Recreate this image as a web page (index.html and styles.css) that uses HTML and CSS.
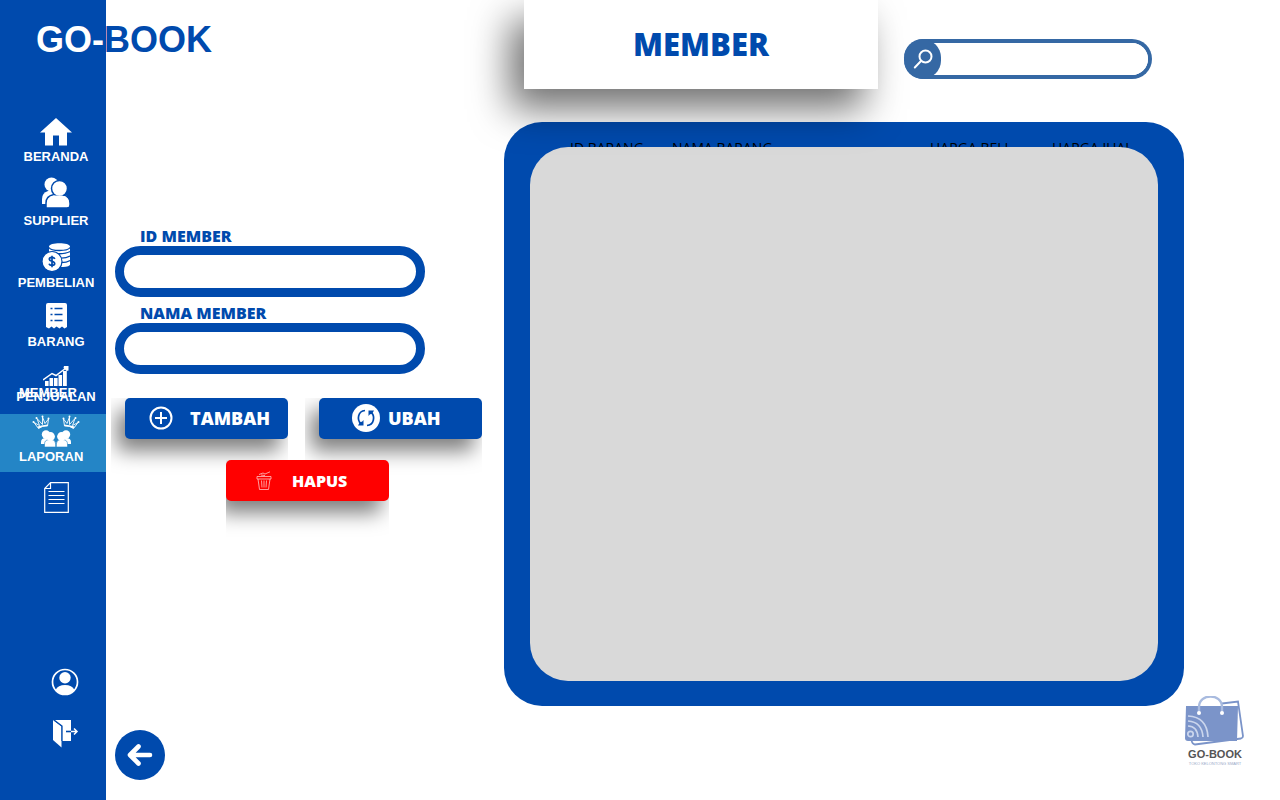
FILE: index.html
```html
<!DOCTYPE html>
<html lang="id">
<head>
<meta charset="utf-8">
<meta name="viewport" content="width=device-width, initial-scale=1">
<title>GO-BOOK | Member</title>
<link rel="stylesheet" href="styles.css">
</head>
<body>
<div class="app">
  <aside class="sidebar">
    <div class="brand"><span class="brand-light">GO-</span><span class="brand-blue">BOOK</span></div>
    <nav class="nav">
      <a class="nav-item" href="#beranda">
        <svg width="32" height="28" viewBox="0 0 32 28" fill="#fff"><path d="M16 0 32 14.500H27V27.500H19V17.500H13V27.500H5V14.500H0Z"/></svg>
        <span>BERANDA</span>
      </a>
      <a class="nav-item nav-item-tall" href="#supplier">
        <svg width="28" height="31" viewBox="0 0 28 31" fill="#fff"><circle cx="9.500" cy="7.500" r="7"/><path d="M0 27V22Q0 16 6 14H14V27Z"/><g stroke="#004aad" stroke-width="1.500"><path d="M4 31V26Q4 19 12 17.500H20Q28 19 28 26V28Q28 31 25 31Z"/><circle cx="17.500" cy="11.500" r="8"/></g><path d="M5 30V26Q5 20 12 18.500H20Q27 20 27 26V28Q27 30 25 30Z"/></svg>
        <span>SUPPLIER</span>
      </a>
      <a class="nav-item" href="#pembelian">
        <svg width="28" height="29" viewBox="0 0 28 29" fill="#fff"><path d="M7 3.500C7 -1 28 -1 28 3.500V22C26 24 22 24 18 24V10H7Z"/><path d="M7 4.500C9 8.500 26 8.500 28 4.500M13 10.500Q23 11.500 28 8.500M17 15Q24 15.500 28 13M19 19.500Q25 19.500 28 17.500" fill="none" stroke="#004aad" stroke-width="1.300"/><circle cx="10" cy="18.500" r="10" stroke="#004aad" stroke-width="1.200"/><path d="M12.800 16C12 13.800 7.300 13.900 7.300 16.200C7.300 18.700 12.700 17.800 12.700 20.600C12.700 23 7.800 23 7 20.800M10 12.800V24.200" fill="none" stroke="#004aad" stroke-width="1.700"/></svg>
        <span>PEMBELIAN</span>
      </a>
      <a class="nav-item nav-item-tall" href="#barang">
        <svg width="21" height="26" viewBox="0 0 21 26" fill="#fff"><path d="M2 0H19Q21 0 21 2V24L18.500 25.500 16 23.500 13.500 25.500 10.500 23.500 8 25.500 5.500 23.500 3 25.500 0 24V2Q0 0 2 0Z"/><path d="M4.500 5.500H6.500M8.500 5.500H16.500M4.500 11.500H6.500M8.500 11.500H16.500M4.500 17.500H6.500M8.500 17.500H16.500" stroke="#004aad" stroke-width="1.600"/></svg>
        <span>BARANG</span>
      </a>
      <a class="nav-item" href="#penjualan">
        <svg width="26" height="20" viewBox="0 0 26 20" fill="#fff"><path d="M2 15h3.600v5H2zM6.500 12h3.600v8H6.500zM11 12h3.600v8H11zM15.500 9h3.600v11h-3.600zM20 5h3.800v15H20z"/><path d="M0 14 9 7.500 13 9.500 23 2" fill="none" stroke="#fff" stroke-width="1.500"/><path d="M21 0H25.500V4.500L23.500 5 20.500 2Z"/></svg>
        <span>PENJUALAN</span>
      </a>
    </nav>
    <a class="nav-active" href="#member">
      <span class="floating-label">MEMBER</span>
      <svg width="48" height="34" viewBox="0 0 48 34" fill="#fff">
        <g fill="none" stroke="#fff" stroke-width=".9" stroke-linejoin="round">
          <path d="M6.500 14.500 2 8.500 7.500 11.500 5 4.500 10.500 10.500 10.500 3 13 9.500 16.500 5 15.500 12Q10.500 11.500 6.500 14.500Z"/>
          <path d="M41.500 14.500 46 8.500 40.500 11.500 43 4.500 37.500 10.500 37.500 3 35 9.500 31.500 5 32.500 12Q37.500 11.500 41.500 14.500Z"/>
        </g>
        <path d="M6.500 14.500 5.500 12.500 9.500 11.500 15.500 10.500V12Q10.500 11.500 6.500 14.500ZM41.500 14.500 42.500 12.500 38.500 11.500 32.500 10.500V12Q37.500 11.500 41.500 14.500Z"/>
        <g><circle cx="1.500" cy="8" r="1"/><circle cx="4.500" cy="4" r="1"/><circle cx="10.500" cy="2.500" r="1"/><circle cx="16.500" cy="4.500" r="1"/><circle cx="46.500" cy="8" r="1"/><circle cx="43.500" cy="4" r="1"/><circle cx="37.500" cy="2.500" r="1"/><circle cx="31.500" cy="4.500" r="1"/></g>
        <circle cx="14" cy="20.500" r="4.200"/><circle cx="34" cy="20.500" r="4.200"/>
        <path d="M9 30V28Q9 24 14 24H18V30ZM39 30V28Q39 24 34 24H30V30Z"/>
        <path d="M12.500 33V30Q12.500 26 17 25.500H20Q23.500 26 23.700 30V33ZM35.500 33V30Q35.500 26 31 25.500H28Q24.500 26 24.300 30V33Z" stroke="#2485c6" stroke-width=".6"/>
        <circle cx="18.500" cy="22.500" r="4.400"/><circle cx="29.500" cy="22.500" r="4.400"/>
      </svg>
    </a>
    <a class="nav-report" href="#laporan">
      <span>LAPORAN</span>
      <svg width="25" height="31" viewBox="0 0 25 31" fill="none" stroke="#fff"><path d="M6.500 .7H24.300V30.300H.7V6.500ZM6.500 .7V6.500H.7" stroke-width="1.200"/><path d="M4.500 9.500H20.500M4.500 13.500H20.500M4.500 17.500H20.500M4.500 21.500H20.500" stroke-width="1"/></svg>
    </a>
    <div class="account">
      <a href="#profil" aria-label="Profil"><svg width="28" height="28" viewBox="0 0 28 28"><circle cx="14" cy="14" r="12.500" fill="none" stroke="#fff" stroke-width="1.700"/><circle cx="14" cy="9.800" r="5.700" fill="#fff"/><path d="M4.500 22Q7 17 14 17T23.500 22Q20 26.500 14 26.500T4.500 22Z" fill="#fff"/></svg></a>
      <a href="#keluar" aria-label="Keluar"><svg width="28" height="29" viewBox="0 0 28 29"><path d="M3 1H20V22H11V7Z" fill="#fff"/><path d="M2 1 10.500 7.500V28.500L2 21Z" fill="#fff"/><path d="M3 1 11 7V22" fill="none" stroke="#004aad" stroke-width="1.300"/><path d="M15 12.500H20" stroke="#004aad" stroke-width="1.600"/><path d="M20 12.500H26M23 9.500 26 12.500 23 15.500" fill="none" stroke="#fff" stroke-width="1.500"/></svg></a>
    </div>
  </aside>

  <main class="main">
    <form class="form">
      <label class="label" for="id-member">ID MEMBER</label>
      <input class="field" id="id-member" type="text">
      <label class="label" for="nama-member">NAMA MEMBER</label>
      <input class="field" id="nama-member" type="text">
      <div class="actions">
        <button class="btn btn-add" type="button">
          <svg width="24" height="24" viewBox="0 0 24 24" fill="none" stroke="#fff" stroke-width="2"><circle cx="12" cy="12" r="10.500"/><path d="M12 6V18M6 12H18"/></svg>
          TAMBAH
        </button>
        <button class="btn btn-edit" type="button">
          <svg width="28" height="28" viewBox="0 0 28 28"><circle cx="14" cy="14" r="14" fill="#fff"/><g fill="none" stroke="#004aad" stroke-width="1.700"><path d="M13 6.500C6 7 4.500 15.500 9 20M15 21.500C22 21 23.500 12.500 19 8"/></g><path d="M6 21.500H11.500V16L10 17.800 8 18ZM22 6.500H16.500V12L18 10.200 20 10Z" fill="#004aad"/></svg>
          UBAH
        </button>
      </div>
      <button class="btn btn-delete" type="button">
        <svg width="16" height="20" viewBox="0 0 16 20" fill="none" stroke="#ffc4c4" stroke-width=".8"><path d="M1 5.500H15V8H1ZM2 8 3.500 18.500H12.500L14 8M5.500 9.500 6 16.500M8 9.500V16.500M10.500 9.500 10 16.500M3 3.500 7 2 9 3 14 .8M5 4 9 4.500"/></svg>
        HAPUS
      </button>
      <a class="back" href="#kembali" aria-label="Kembali"><svg width="26" height="24" viewBox="0 0 26 24" fill="none" stroke="#fff" stroke-width="4.600" stroke-linecap="round" stroke-linejoin="round"><path d="M23 12H4M11.500 3.500 3 12 11.500 20.500"/></svg></a>
    </form>

    <section class="board">
      <header class="top">
        <h1 class="title">MEMBER</h1>
        <div class="search">
          <button class="search-btn" type="button" aria-label="Cari"><svg width="20" height="20" viewBox="0 0 20 20" fill="none" stroke="#fff" stroke-width="2" stroke-linecap="round"><circle cx="12.500" cy="7.500" r="6"/><path d="M8 12 1.800 18.500"/></svg></button>
          <input class="search-input" type="search" aria-label="Cari member">
        </div>
      </header>
      <div class="panel">
        <table class="heads">
          <thead><tr><th class="col-id">ID BARANG</th><th class="col-name">NAMA BARANG</th><th class="col-buy">HARGA BELI</th><th class="col-sell">HARGA JUAL</th></tr></thead>
        </table>
        <div class="sheet"></div>
      </div>
    </section>

    <div class="mark">
      <svg width="60" height="50" viewBox="0 0 60 50"><path d="M37 7.500 53 5.500 58 40Q58 42 56 42.500L10 48.500Q7 48 6.500 44" fill="none" stroke="#7b94c9" stroke-width="1.800"/><path d="M1 10H53L52 45H3Q0 45 0 42Z" fill="#7b94c9"/><path d="M14 17V11C14-3 37-3 37 11V17" fill="none" stroke="#a9bbdf" stroke-width="2.400"/><circle cx="14" cy="17" r="2" fill="#fff"/><circle cx="37" cy="17" r="2" fill="#fff"/><g fill="none" stroke="#cbd6ed" stroke-width="1.700"><circle cx="5.500" cy="38" r="2.700"/><path d="M3 30Q12 30 13 41M3 25Q17 26 18 41M3 20Q22 21 23 41"/></g></svg>
      <strong class="mark-name">GO-BOOK</strong>
      <span class="mark-sub">TOKO KELONTONG SMART</span>
    </div>
  </main>
</div>
</body>
</html>
```

FILE: styles.css
```css
* { box-sizing: border-box; }

body {
  margin: 0;
  background: #fff;
  font-family: "Open Sans", "Noto Sans", sans-serif;
}

a { color: inherit; text-decoration: none; }
svg { display: block; flex: none; }

.app { display: flex; min-height: 100vh; }

/* Sidebar */
.sidebar {
  display: flex;
  flex-direction: column;
  flex: none;
  width: 106px;
  background: #004aad;
  color: #fff;
  font: bold 13px/14px "Liberation Sans", Arial, sans-serif;
}

.brand {
  position: relative;
  z-index: 1;
  padding: 20px 0 0 36px;
  height: 104px;
  font-size: 36px;
  line-height: 40px;
  white-space: nowrap;
}
.brand-blue { color: #004aad; }

.nav {
  display: grid;
  grid-template-rows: 60px 64px 62px 59px 55px;
}
.nav-item {
  display: flex;
  flex-direction: column;
  align-items: center;
  justify-content: flex-end;
  gap: 4px;
  padding-left: 6px;
}
.nav-item-tall { gap: 6px; }

.nav-active {
  position: relative;
  display: flex;
  justify-content: center;
  height: 58px;
  margin-top: 10px;
  padding-left: 6px;
  background: #2485c6;
}
.floating-label {
  position: absolute;
  left: 19px;
  top: -28px;
}

.nav-report {
  position: relative;
  display: flex;
  flex-direction: column;
  align-items: center;
  gap: 18px;
  margin-top: -22px;
  padding-left: 6px;
}
.nav-report span { align-self: flex-start; margin-left: 13px; }

.account {
  display: flex;
  flex-direction: column;
  gap: 23px;
  margin-top: auto;
  padding: 0 0 52px 51px;
}

/* Main area */
.main { display: flex; flex: 1; min-width: 0; }

.form {
  display: flex;
  flex-direction: column;
  align-items: flex-start;
  flex: none;
  width: 398px;
  padding: 227px 0 20px 9px;
}

.label {
  padding-left: 25px;
  color: #004aad;
  font-size: 16px;
  font-weight: 800;
  line-height: 18px;
}
.field {
  width: 310px;
  height: 51px;
  margin: 1px 0 7px;
  padding: 0 18px;
  border: 9px solid #004aad;
  border-radius: 26px;
  background: #fff;
  font: 600 16px "Open Sans", sans-serif;
  outline: 0;
}

.actions { display: flex; gap: 31px; padding: 17px 0 0 10px; }

.btn {
  display: flex;
  align-items: center;
  width: 163px;
  height: 41px;
  padding: 0;
  border: 0;
  border-radius: 5px;
  background: #004aad;
  color: #fff;
  font: 800 18px/24px "Open Sans", sans-serif;
  box-shadow: -8px 12px 20px rgba(0, 0, 0, .5);
  clip-path: inset(0 0 -40px -14px);
}
.btn-add { gap: 17px; padding: 0 0 2px 24px; }
.btn-edit { gap: 8px; padding: 0 0 2px 33px; }
.btn-delete {
  gap: 20px;
  margin: 21px 0 0 111px;
  padding-left: 30px;
  background: #f00;
  font-size: 16px;
  clip-path: inset(0 0 -40px 0);
}

.back {
  display: flex;
  align-items: center;
  justify-content: center;
  width: 50px;
  height: 50px;
  margin-top: auto;
  border-radius: 50%;
  background: #004aad;
}

/* Member list */
.board {
  display: flex;
  flex-direction: column;
  flex: 1;
  min-width: 0;
  padding-bottom: 94px;
}
.top {
  position: relative;
  z-index: 1;
  display: flex;
  gap: 26px;
  padding: 0 32px 0 20px;
}
.title {
  flex: 1;
  height: 89px;
  margin: 0;
  background: #fff;
  color: #004aad;
  font-size: 31px;
  font-weight: 800;
  line-height: 88px;
  text-align: center;
  box-shadow: -14px 20px 38px rgba(0, 0, 0, .56);
}
.search {
  display: flex;
  flex: none;
  width: 248px;
  height: 40px;
  margin-top: 39px;
  border: solid #3568a4;
  border-width: 4px 4px 4px 0;
  border-radius: 20px;
  background: #fff;
}
.search-btn {
  display: flex;
  align-items: center;
  justify-content: center;
  width: 37px;
  height: 40px;
  margin-top: -4px;
  padding: 0;
  border: 0;
  border-radius: 20px;
  background: #3568a4;
}
.search-input {
  flex: 1;
  min-width: 0;
  border: 0;
  border-radius: 16px;
  background: #fff;
  outline: 0;
}

.panel {
  display: flex;
  flex-direction: column;
  flex: 1;
  margin-top: 33px;
  padding: 16px 26px 25px;
  border-radius: 38px;
  background: #004aad;
}
.heads {
  width: 100%;
  padding-left: 40px;
  border-spacing: 0;
  table-layout: fixed;
  color: #000;
  font-size: 14px;
  line-height: 20px;
}
.heads th {
  padding: 0;
  font-weight: 400;
  text-align: left;
  white-space: nowrap;
}
.col-id { width: 102px; }
.col-buy { width: 122px; }
.col-sell { width: 106px; }
.sheet {
  position: relative;
  flex: 1;
  min-height: 200px;
  margin-top: -11px;
  border-radius: 38px;
  background: #d9d9d9;
}

/* Corner logo */
.mark {
  display: flex;
  flex-direction: column;
  align-items: center;
  align-self: flex-end;
  flex: none;
  width: 60px;
  margin: 0 35px 33px 1px;
  font-family: "Liberation Sans", Arial, sans-serif;
  white-space: nowrap;
}
.mark-name { margin-top: 2px; color: #555; font-size: 11px; line-height: 13px; }
.mark-sub { color: #9aa9c8; font-size: 4px; line-height: 6px; }
```
